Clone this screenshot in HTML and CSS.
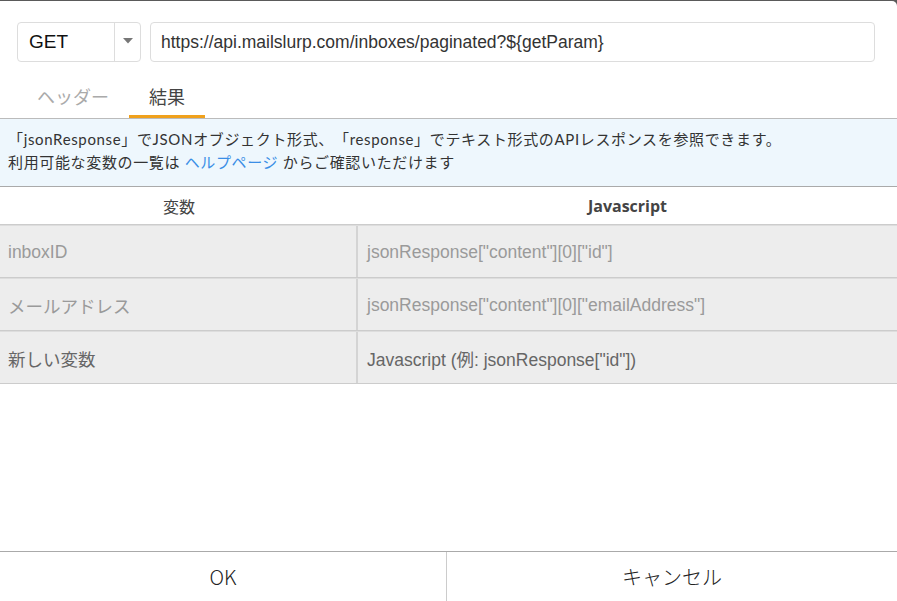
FILE: index.html
```html
<!DOCTYPE html>
<html lang="ja">
<head>
<meta charset="utf-8">
<link rel="stylesheet" href="styles.css">
</head>
<body>
<div class="modal">
  <div class="request">
    <div class="method">
      <span class="method-value">GET</span>
      <span class="method-arrow"><svg width="10" height="6" viewBox="0 0 10 6"><path d="M0 0H10L5 5.5Z" fill="#777"/></svg></span>
    </div>
    <div class="url">https://api.mailslurp.com/inboxes/paginated?${getParam}</div>
  </div>
  <div class="tabs">
    <div class="tab">ヘッダー</div>
    <div class="tab active">結果</div>
  </div>
  <div class="info">
    <div>「jsonResponse」でJSONオブジェクト形式、「response」でテキスト形式のAPIレスポンスを参照できます。</div>
    <div>利用可能な変数の一覧は <span class="link">ヘルプページ</span> からご確認いただけます</div>
  </div>
  <div class="table">
    <div class="thead">
      <div class="cell-l">変数</div>
      <div class="cell-r bold">Javascript</div>
    </div>
    <div class="row">
      <div class="cell-l light">inboxID</div>
      <div class="cell-r light">jsonResponse["content"][0]["id"]</div>
    </div>
    <div class="row">
      <div class="cell-l light">メールアドレス</div>
      <div class="cell-r light">jsonResponse["content"][0]["emailAddress"]</div>
    </div>
    <div class="row">
      <div class="cell-l dark">新しい変数</div>
      <div class="cell-r dark">Javascript (例: jsonResponse["id"])</div>
    </div>
  </div>
  <div class="spacer"></div>
  <div class="footer">
    <div class="btn btn-ok">OK</div>
    <div class="btn">キャンセル</div>
  </div>
</div>
</body>
</html>
```
FILE: styles.css
```css
html, body {
  margin: 0;
  padding: 0;
  background: #5a5a5a;
}
body {
  height: 601px;
  overflow: hidden;
}
.modal {
  margin-top: 1px;
  height: 600px;
  background: #fff;
  border-top-right-radius: 5px;
  display: flex;
  flex-direction: column;
  font-family: "Liberation Sans", Arial, "Noto Sans CJK JP", sans-serif;
  text-spacing-trim: space-all;
}
.request {
  display: flex;
  gap: 9px;
  padding: 21px 22px 0 17px;
}
.method {
  width: 124px;
  height: 40px;
  box-sizing: border-box;
  border: 1px solid #ddd;
  border-radius: 4px;
  display: flex;
}
.method-value {
  flex: 1;
  padding-left: 11px;
  line-height: 38px;
  font-size: 19px;
  color: #111;
  border-right: 1px solid #ddd;
}
.method-arrow {
  width: 25px;
  display: flex;
  align-items: center;
  justify-content: center;
  padding-bottom: 2px;
  box-sizing: border-box;
}
.url {
  flex: 1;
  height: 40px;
  box-sizing: border-box;
  border: 1px solid #ddd;
  border-radius: 4px;
  padding-left: 10px;
  line-height: 38px;
  font-size: 17.5px;
  color: #333;
}
.tabs {
  display: flex;
  padding-left: 17px;
  border-bottom: 1px solid #bbb;
  font-family: "Noto Sans CJK JP", sans-serif;
}
.tab {
  padding: 22px 20px 7px;
  line-height: 24px;
  font-size: 18px;
  color: #aaa;
  border-bottom: 3px solid transparent;
}
.tab.active {
  color: #444;
  border-bottom-color: #f0a11c;
}
.info {
  background: #eef7fd;
  border-bottom: 1px solid #aaa;
  padding: 9px 8px 12px;
  font-family: Lato, "Noto Sans CJK JP", sans-serif;
  font-size: 15px;
  line-height: 23px;
  color: #333;
  letter-spacing: 0.65px;
  white-space: nowrap;
}
.link {
  color: #3a8ee6;
}
.table {
  display: flex;
  flex-direction: column;
}
.thead {
  display: flex;
  height: 37px;
  align-items: center;
  border-bottom: 1px solid #ccc;
  font-family: "Open Sans", "Noto Sans CJK JP", sans-serif;
  font-size: 16px;
  color: #444;
}
.thead .cell-l, .thead .cell-r {
  text-align: center;
}
.bold {
  font-weight: 700;
}
.cell-l {
  width: 358px;
  flex: none;
  box-sizing: border-box;
}
.cell-r {
  flex: 1;
}
.row {
  display: flex;
  height: 53px;
  background: #ededed;
  border-top: 1px solid #ddd;
  border-bottom: 1px solid #ccc;
  box-sizing: border-box;
  font-size: 17.5px;
}
.row .cell-l {
  border-right: 2px solid #d4d4d4;
  padding-left: 8px;
  display: flex;
  align-items: center;
  padding-top: 2px;
}
.row .cell-r {
  padding-left: 9px;
  display: flex;
  align-items: center;
  padding-top: 2px;
}
.light {
  color: #9a9a9a;
}
.dark {
  color: #666;
}
.spacer {
  flex: 1;
}
.footer {
  display: flex;
  height: 49px;
  border-top: 1px solid #aaa;
  font-family: "Noto Sans CJK JP", sans-serif;
  font-size: 20px;
  font-weight: 300;
  color: #222;
}
.btn {
  flex: 1;
  display: flex;
  align-items: center;
  justify-content: center;
}
.btn-ok {
  flex: none;
  width: 446px;
}
.btn + .btn {
  border-left: 1px solid #ccc;
}
```
